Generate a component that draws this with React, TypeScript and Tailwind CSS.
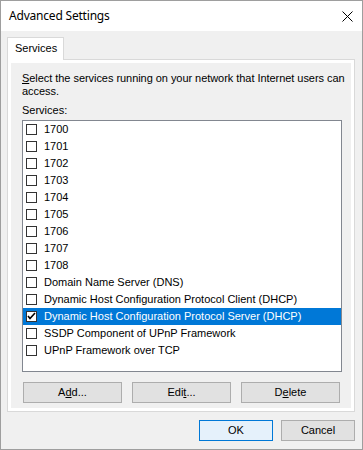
import React from 'react';

const services = [
  '1700',
  '1701',
  '1702',
  '1703',
  '1704',
  '1705',
  '1706',
  '1707',
  '1708',
  'Domain Name Server (DNS)',
  'Dynamic Host Configuration Protocol Client (DHCP)',
  'Dynamic Host Configuration Protocol Server (DHCP)',
  'SSDP Component of UPnP Framework',
  'UPnP Framework over TCP',
];

function CheckBox({ checked }: { checked: boolean }) {
  return (
    <div className="w-[11px] h-[11px] border border-[#333333] bg-white flex items-center justify-center shrink-0">
      {checked && (
        <svg width="9" height="9" viewBox="0 0 9 9">
          <polyline points="1,4 3,6.5 8,1" fill="none" stroke="#000" strokeWidth="1.6" />
        </svg>
      )}
    </div>
  );
}

function Button({ children, primary }: { children: React.ReactNode; primary?: boolean }) {
  return (
    <div
      className={
        primary
          ? 'h-[21px] w-[74px] flex items-center justify-center border border-[#0078d7] bg-[#e5f1fb]'
          : 'h-[21px] w-[74px] flex items-center justify-center border border-[#adadad] bg-[#e1e1e1]'
      }
    >
      {children}
    </div>
  );
}

export default function App() {
  const selected = 11;
  return (
    <div className="w-[363px] h-[450px] border border-[#9e9e9e] bg-[#f0f0f0] flex flex-col text-[11px] text-black font-['Liberation_Sans',Arial,sans-serif]">
      {/* Title bar */}
      <div className="h-[30px] bg-white flex items-center justify-between pl-[8px] pr-[9px]">
        <span className="text-[12px] tracking-[-0.2px] font-['Segoe_UI','Noto_Sans',sans-serif]">Advanced Settings</span>
        <svg width="11" height="11" viewBox="0 0 11 11">
          <path d="M0.5 0.5 L10.5 10.5 M10.5 0.5 L0.5 10.5" stroke="#000" strokeWidth="1" />
        </svg>
      </div>

      {/* Body */}
      <div className="flex flex-col pl-[6px] pr-[7px] pt-[6px]">
        <div className="relative z-10 -mb-[1px] w-[57px] h-[23px] bg-white border border-b-0 border-[#d9d9d9] flex items-center pl-[7px] pb-[1px]">
          Services
        </div>

        <div className="border border-[#d9d9d9] bg-white p-[3px]">
          <div className="bg-[#f0f0f0] flex flex-col pl-[11px] pr-[9px] pt-[9px] pb-[5px]">
            <p className="leading-[13px] -mr-[9px] tracking-[-0.05px]">
              <span className="underline">S</span>elect the services running on your network that Internet users can access.
            </p>
            <div className="leading-[13px] mt-[6px]">Services:</div>

            <div className="mt-[3px] h-[252px] border border-[#828790] bg-white flex flex-col">
              {services.map((s, i) => (
                <div
                  key={s}
                  className={
                    i === selected
                      ? 'h-[17px] flex items-center gap-[7px] pl-[3px] bg-[#0078d7] text-white'
                      : 'h-[17px] flex items-center gap-[7px] pl-[3px]'
                  }
                >
                  <CheckBox checked={i === selected} />
                  <span className="leading-[17px]">{s}</span>
                </div>
              ))}
            </div>

            <div className="mt-[10px] pl-[1px] flex gap-[10px]">
              <div className="h-[21px] w-[99px] flex items-center justify-center border border-[#adadad] bg-[#e1e1e1]">
                <span>
                  A<span className="underline">d</span>d...
                </span>
              </div>
              <div className="h-[21px] w-[99px] flex items-center justify-center border border-[#adadad] bg-[#e1e1e1]">
                <span>
                  Edi<span className="underline">t</span>...
                </span>
              </div>
              <div className="h-[21px] w-[99px] flex items-center justify-center border border-[#adadad] bg-[#e1e1e1]">
                <span>
                  D<span className="underline">e</span>lete
                </span>
              </div>
            </div>
          </div>
        </div>

        {/* Dialog buttons */}
        <div className="mt-[8px] flex justify-end gap-[8px]">
          <Button primary>OK</Button>
          <Button>Cancel</Button>
        </div>
      </div>
    </div>
  );
}
